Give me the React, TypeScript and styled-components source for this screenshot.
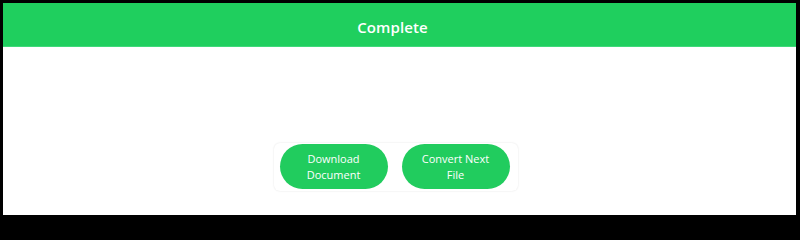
import React from "react";
import styled, { createGlobalStyle } from "styled-components";

const Global = createGlobalStyle`
  html, body { margin: 0; padding: 0; background: #000; }
  #root { width: 800px; height: 219px; }
`;

const Frame = styled.div`
  box-sizing: border-box;
  width: 800px;
  height: 219px;
  padding: 3px 4px 4px 3px;
  background: #000;
`;

const Panel = styled.div`
  display: flex;
  flex-direction: column;
  height: 100%;
  background: #fff;
`;

const Header = styled.div`
  box-sizing: border-box;
  display: flex;
  align-items: center;
  justify-content: center;
  height: 44px;
  padding: 5px 14px 0 0;
  background: #1fcf5e;
  border-bottom: 1px solid #3fd97a;
  color: #fff;
  font-family: "Open Sans", "Liberation Sans", sans-serif;
  font-weight: 600;
  font-size: 15px;
  letter-spacing: 0.1px;
`;

const Body = styled.div`
  flex: 1;
  display: flex;
  justify-content: center;
  align-items: flex-start;
  padding-top: 96px;
`;

const Card = styled.div`
  display: flex;
  gap: 14px;
  padding: 1px 8px 2px 6px;
  margin-left: -8px;
  border-radius: 6px;
  box-shadow: 0 0 2px rgba(0, 0, 0, 0.12);
`;

const Button = styled.button`
  width: 108px;
  height: 45px;
  border: none;
  border-radius: 23px;
  background: #21cc5e;
  color: #fff;
  font-family: "Open Sans", "Liberation Sans", sans-serif;
  font-size: 11px;
  line-height: 16px;
  padding: 0 8px;
  text-align: center;
  cursor: pointer;
`;

export default function App() {
  return (
    <>
      <Global />
      <Frame>
        <Panel>
          <Header>Complete</Header>
          <Body>
            <Card>
              <Button>Download<br />Document</Button>
              <Button>Convert Next<br />File</Button>
            </Card>
          </Body>
        </Panel>
      </Frame>
    </>
  );
}
